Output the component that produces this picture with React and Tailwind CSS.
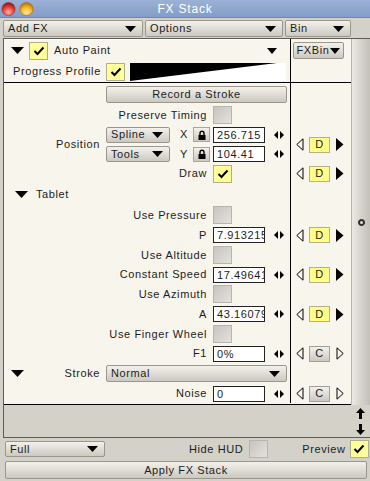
import React from "react";

const grad = "bg-gradient-to-b from-[#f3f1eb] to-[#ccc9c1]";

function Arrow({ w = 11, h = 6 }) {
  return (
    <svg width={w} height={h} viewBox={`0 0 ${w} ${h}`} className="shrink-0">
      <polygon points={`0,0 ${w},0 ${w / 2},${h}`} fill="#000" />
    </svg>
  );
}

function Dropdown({ label, className = "" }) {
  return (
    <div
      className={`flex items-center justify-between border border-[#9a968e] rounded-[2px] ${grad} pl-[4px] pr-[6px] ${className}`}
    >
      <span className="leading-none">{label}</span>
      <Arrow />
    </div>
  );
}

function CheckMark() {
  return (
    <svg width="12" height="10" viewBox="0 0 12 10">
      <path d="M1.5 5 L4.5 8 L10.5 1.5" stroke="#000" strokeWidth="2" fill="none" />
    </svg>
  );
}

function Check({ on }) {
  return on ? (
    <div className="w-[19px] h-[18px] shrink-0 border border-[#b1ae8c] bg-[#ffff99] flex items-center justify-center">
      <CheckMark />
    </div>
  ) : (
    <div className="w-[19px] h-[18px] shrink-0 border border-[#b8b5ae] bg-gradient-to-br from-[#c6c4be] to-[#e4e2dc]" />
  );
}

function Field({ value }) {
  return (
    <div className="w-[52px] h-[16px] shrink-0 bg-white border border-[#222] pl-[3px] leading-[14px] overflow-hidden whitespace-nowrap">
      {value}
    </div>
  );
}

function DoubleArrow() {
  return (
    <svg width="10" height="8" viewBox="0 0 10 8" className="shrink-0">
      <polygon points="0,4 4,0 4,8" fill="#000" />
      <polygon points="6,0 10,4 6,8" fill="#000" />
    </svg>
  );
}

function Lock() {
  return (
    <div className={`w-[17px] h-[15px] shrink-0 ${grad} border border-[#aaa69e] flex items-center justify-center`}>
      <svg width="8" height="10" viewBox="0 0 8 10">
        <path d="M2 5 V3.2 a2 2 0 0 1 4 0 V5" stroke="#000" strokeWidth="1.4" fill="none" />
        <rect x="0.5" y="5" width="7" height="5" fill="#000" />
      </svg>
    </div>
  );
}

function TriLeft() {
  return (
    <svg width="8" height="13" viewBox="0 0 8 13" className="shrink-0">
      <polygon points="7,0.8 0.8,6.5 7,12.2" fill="none" stroke="#000" strokeWidth="1" />
    </svg>
  );
}

function TriRight({ solid }) {
  return (
    <svg width="8" height="13" viewBox="0 0 8 13" className="shrink-0">
      {solid ? (
        <polygon points="0,0 7.5,6.5 0,13" fill="#000" />
      ) : (
        <polygon points="1,0.8 7.2,6.5 1,12.2" fill="none" stroke="#000" strokeWidth="1" />
      )}
    </svg>
  );
}

function DCtrl({ c }) {
  return (
    <div className="flex items-center pl-[5px]">
      <TriLeft />
      <div
        className={`ml-[5px] w-[21px] h-[16px] flex items-center justify-center border ${
          c ? `${grad} border-[#a3a098]` : "bg-[#ffff88] border-[#b3b08a]"
        }`}
      >
        {c ? "C" : "D"}
      </div>
      <div className="ml-[6px]">
        <TriRight solid={!c} />
      </div>
    </div>
  );
}

function Row({ h, children, right }) {
  return (
    <div className={`flex ${h}`}>
      <div className="w-[286px] flex items-center">{children}</div>
      <div className="w-[61px] border-l border-black flex items-center">{right}</div>
    </div>
  );
}

function LRow({ h = "h-[20px]", label, children, right }) {
  return (
    <Row h={h} right={right}>
      <div className="w-[206px] text-right pr-[3px] whitespace-nowrap">{label}</div>
      <div className="ml-[3px] flex items-center">{children}</div>
    </Row>
  );
}

function FieldCtl({ value }) {
  return (
    <>
      <Field value={value} />
      <div className="ml-[9px]">
        <DoubleArrow />
      </div>
    </>
  );
}

function Disclose() {
  return (
    <svg width="13" height="7" viewBox="0 0 13 7" className="shrink-0">
      <polygon points="0,0 13,0 6.5,7" fill="#000" />
    </svg>
  );
}

function ArrowUD({ down }) {
  return (
    <svg width="9" height="11" viewBox="0 0 9 11" style={down ? { transform: "rotate(180deg)" } : undefined}>
      <polygon points="4.5,0 9,5 6,5 6,11 3,11 3,5 0,5" fill="#000" />
    </svg>
  );
}

function Lights() {
  return (
    <svg width="34" height="16" viewBox="0 0 34 16">
      <defs>
        <radialGradient id="rg" cx="50%" cy="75%" r="65%">
          <stop offset="0" stopColor="#ffb0a8" />
          <stop offset="0.6" stopColor="#e8453c" />
          <stop offset="1" stopColor="#a8161a" />
        </radialGradient>
        <radialGradient id="og" cx="50%" cy="75%" r="65%">
          <stop offset="0" stopColor="#ffe9a0" />
          <stop offset="0.6" stopColor="#f7b62c" />
          <stop offset="1" stopColor="#c97a00" />
        </radialGradient>
      </defs>
      <circle cx="7.5" cy="8" r="6.6" fill="url(#rg)" stroke="#8c3a30" strokeWidth="0.6" />
      <circle cx="25.5" cy="8" r="6.6" fill="url(#og)" stroke="#9a6a10" strokeWidth="0.6" />
    </svg>
  );
}

export default function App() {
  return (
    <div className="w-[370px] h-[481px] overflow-hidden bg-[#d4d1c9] flex flex-col font-['Liberation_Sans',Arial,sans-serif] text-[11px] tracking-[0.6px] text-[#1c1c1c]">
      {/* title bar */}
      <div className="h-[18px] shrink-0 grid grid-cols-[1fr_auto_1fr] items-center bg-gradient-to-b from-[#9cb1d6] to-[#829dc9] border-b border-[#6f86ad]">
        <div className="pl-[1px] flex items-center">
          <Lights />
        </div>
        <div className="text-white text-[12px] tracking-[0.8px]">FX Stack</div>
        <div />
      </div>

      {/* menu row */}
      <div className="mt-[2px] h-[17px] shrink-0 flex pl-[3px] gap-[2px]">
        <Dropdown label="Add FX" className="w-[140px] h-[17px]" />
        <Dropdown label="Options" className="w-[138px] h-[17px]" />
        <Dropdown label="Bin" className="w-[66px] h-[17px]" />
      </div>

      {/* frame */}
      <div className="mt-[1px] ml-[3px] shrink-0 border-l border-t border-b border-[#5f5c57] flex flex-col">
        <div className="flex">
          {/* cream area */}
          <div className="w-[347px] h-[366px] bg-[#f8f5ed] border-b border-black flex flex-col">
            {/* header */}
            <div className="flex border-b border-black">
              <div className="w-[286px] flex flex-col border-t border-white">
                <div className="h-[21px] flex items-center">
                  <div className="ml-[7px]">
                    <Disclose />
                  </div>
                  <div className="ml-[5px]">
                    <Check on />
                  </div>
                  <span className="ml-[6px]">Auto Paint</span>
                  <div className="ml-auto mr-[13px]">
                    <Arrow w={10} h={6} />
                  </div>
                </div>
                <div className="h-[21px] flex items-center">
                  <span className="ml-[9px] w-[93px]">Progress Profile</span>
                  <Check on />
                  <svg width="156" height="18" viewBox="0 0 156 18" className="ml-[5px] bg-white">
                    <polygon points="0,0 147,0 0,18" fill="#000" />
                  </svg>
                </div>
              </div>
              <div className="w-[61px] border-l border-black pt-[3px] pl-[2px]">
                <div className={`w-[51px] h-[17px] ${grad} border border-[#9a968e] rounded-[2px] flex items-center justify-center gap-[1px]`}>
                  <span>FXBin</span>
                  <Arrow w={10} h={6} />
                </div>
              </div>
            </div>

            {/* Record a Stroke */}
            <Row h="h-[22px]">
              <div className={`ml-[102px] w-[181px] h-[17px] ${grad} border border-[#9a968e] rounded-[2px] flex items-center justify-center`}>
                Record a Stroke
              </div>
            </Row>

            <LRow label="Preserve Timing">
              <Check />
            </LRow>

            {/* Position block */}
            <Row h="h-[39px]" right={<DCtrl />}>
              <div className="w-[102px] text-right pr-[6px]">Position</div>
              <div className="flex flex-col">
                <div className="h-[19px] flex items-center">
                  <Dropdown label="Spline" className="w-[64px] h-[16px]" />
                  <span className="ml-[10px] w-[8px]">X</span>
                  <div className="ml-[5px]">
                    <Lock />
                  </div>
                  <div className="ml-[3px] flex items-center">
                    <FieldCtl value="256.715" />
                  </div>
                </div>
                <div className="h-[20px] flex items-center">
                  <Dropdown label="Tools" className="w-[64px] h-[16px]" />
                  <span className="ml-[10px] w-[8px]">Y</span>
                  <div className="ml-[5px]">
                    <Lock />
                  </div>
                  <div className="ml-[3px] flex items-center">
                    <FieldCtl value="104.41" />
                  </div>
                </div>
              </div>
            </Row>

            <LRow h="h-[19px]" label="Draw" right={<DCtrl />}>
              <Check on />
            </LRow>

            <Row h="h-[22px]">
              <div className="ml-[11px]">
                <Disclose />
              </div>
              <span className="ml-[8px]">Tablet</span>
            </Row>

            <LRow label="Use Pressure">
              <Check />
            </LRow>
            <LRow label="P" right={<DCtrl />}>
              <FieldCtl value="7.913215" />
            </LRow>
            <LRow label="Use Altitude">
              <Check />
            </LRow>
            <LRow h="h-[19px]" label="Constant Speed" right={<DCtrl />}>
              <FieldCtl value="17.496412" />
            </LRow>
            <LRow label="Use Azimuth">
              <Check />
            </LRow>
            <LRow label="A" right={<DCtrl />}>
              <FieldCtl value="43.160795" />
            </LRow>
            <LRow label="Use Finger Wheel">
              <Check />
            </LRow>
            <LRow h="h-[19px]" label="F1" right={<DCtrl c />}>
              <FieldCtl value="0%" />
            </LRow>

            <Row h="h-[21px]">
              <div className="w-[102px] flex items-center justify-between pl-[7px] pr-[6px]">
                <Disclose />
                <span>Stroke</span>
              </div>
              <Dropdown label="Normal" className="w-[181px] h-[17px]" />
            </Row>

            <LRow h="h-[19px]" label="Noise" right={<DCtrl c />}>
              <FieldCtl value="0" />
            </LRow>
          </div>

          {/* vertical scrollbar */}
          <div className="w-[20px] h-[366px] bg-gradient-to-r from-[#ebe9e3] via-[#d6d3cc] to-[#c3c0b9] border-l border-[#b9b6af] flex flex-col items-center">
            <div className="mt-[180px] w-[7px] h-[7px] rounded-full bg-[#333] border border-[#222] flex items-center justify-center">
              <div className="w-[3px] h-[3px] rounded-full bg-[#ddd]" />
            </div>
          </div>
        </div>

        {/* bottom strip */}
        <div className="h-[32px] flex">
          <div className="w-[347px]" />
          <div className="w-[20px] flex flex-col items-center justify-center gap-[5px]">
            <ArrowUD />
            <ArrowUD down />
          </div>
        </div>
      </div>

      {/* bottom controls */}
      <div className="mt-[2px] h-[18px] shrink-0 flex items-center pl-[5px]">
        <Dropdown label="Full" className="w-[100px] h-[16px]" />
        <span className="ml-[84px]">Hide HUD</span>
        <div className="ml-[6px]">
          <Check />
        </div>
        <span className="ml-[34px]">Preview</span>
        <div className="ml-[4px]">
          <Check on />
        </div>
      </div>

      <div className={`mt-[3px] ml-[5px] w-[362px] h-[18px] shrink-0 ${grad} border border-[#9a968e] rounded-[2px] flex items-center justify-center`}>
        Apply FX Stack
      </div>
    </div>
  );
}
